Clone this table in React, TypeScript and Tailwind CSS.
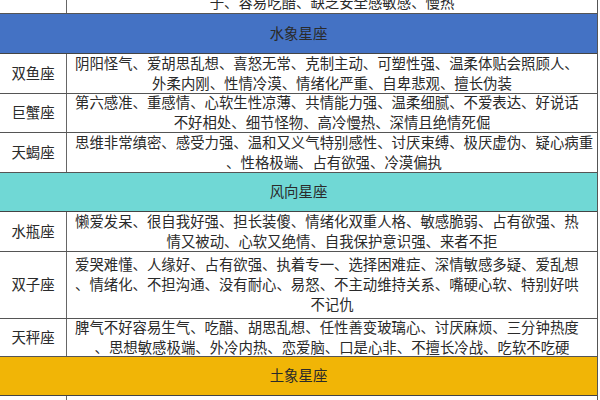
import React from "react";

type SignRow = { kind: "sign"; name: string; h: string; lines: string[] };
type HeadRow = { kind: "head"; title: string; h: string; bg: string };
type Row = SignRow | HeadRow;

const rows: Row[] = [
  {
    kind: "sign",
    name: "射手座",
    h: "h-[41px]",
    lines: [
      "热爱自由、乐观开朗、喜欢冒险、心直口快、粗心大意、不爱被束缚、像个孩",
      "子、容易吃醋、缺乏安全感敏感、慢热",
    ],
  },
  { kind: "head", title: "水象星座", h: "h-[40px]", bg: "bg-[#4472c4]" },
  {
    kind: "sign",
    name: "双鱼座",
    h: "h-[40px]",
    lines: [
      "阴阳怪气、爱胡思乱想、喜怒无常、克制主动、可塑性强、温柔体贴会照顾人、",
      "外柔内刚、性情冷漠、情绪化严重、自卑悲观、擅长伪装",
    ],
  },
  {
    kind: "sign",
    name: "巨蟹座",
    h: "h-[39px]",
    lines: [
      "第六感准、重感情、心软生性凉薄、共情能力强、温柔细腻、不爱表达、好说话",
      "不好相处、细节怪物、高冷慢热、深情且绝情死倔",
    ],
  },
  {
    kind: "sign",
    name: "天蝎座",
    h: "h-[40px]",
    lines: [
      "思维非常缜密、感受力强、温和又义气特别感性、讨厌束缚、极厌虚伪、疑心病重",
      "、性格极端、占有欲强、冷漠偏执",
    ],
  },
  { kind: "head", title: "风向星座", h: "h-[39px]", bg: "bg-[#70d8d5]" },
  {
    kind: "sign",
    name: "水瓶座",
    h: "h-[40px]",
    lines: [
      "懒爱发呆、很自我好强、担长装傻、情绪化双重人格、敏感脆弱、占有欲强、热",
      "情又被动、心软又绝情、自我保护意识强、来者不拒",
    ],
  },
  {
    kind: "sign",
    name: "双子座",
    h: "h-[67px]",
    lines: [
      "爱哭难懂、人缘好、占有欲强、执着专一、选择困难症、深情敏感多疑、爱乱想",
      "、情绪化、不担沟通、没有耐心、易怒、不主动维持关系、嘴硬心软、特别好哄",
      "不记仇",
    ],
  },
  {
    kind: "sign",
    name: "天秤座",
    h: "h-[38px]",
    lines: [
      "脾气不好容易生气、吃醋、胡思乱想、任性善变玻璃心、讨厌麻烦、三分钟热度",
      "、思想敏感极端、外冷内热、恋爱脑、口是心非、不擅长冷战、吃软不吃硬",
    ],
  },
  { kind: "head", title: "土象星座", h: "h-[39px]", bg: "bg-[#f1b506]" },
  {
    kind: "sign",
    name: "金牛座",
    h: "h-[52px]",
    lines: [
      "固执倔强、慢热专一、占有欲强、追求安稳、重视物质、有耐心、心思细腻、",
      "不善表达、记仇、吃软不吃硬",
    ],
  },
];

const App = () => {
  return (
    <div
      className="w-[600px] h-[400px] overflow-hidden bg-white text-[#2a2a2a] text-[14.4px] leading-[20px]"
      style={{ fontFamily: '"Liberation Serif", "Noto Sans CJK SC", serif' }}
    >
      <div className="-mt-[27px] w-[598px] border-r border-[#555]">
        {rows.map((row, i) =>
          row.kind === "head" ? (
            <div
              key={i}
              className={`${row.h} ${row.bg} border-b border-[#444] flex items-center justify-center`}
            >
              {row.title}
            </div>
          ) : (
            <div key={i} className={`${row.h} flex border-b border-[#555]`}>
              <div className="w-[67px] shrink-0 border-r border-[#666] flex items-center justify-center">
                {row.name}
              </div>
              <div className="flex-1 px-2 flex flex-col justify-center">
                {row.lines.map((line, j) => (
                  <div
                    key={j}
                    className={
                      j === row.lines.length - 1
                        ? "whitespace-nowrap text-center"
                        : "whitespace-nowrap text-left"
                    }
                  >
                    {line}
                  </div>
                ))}
              </div>
            </div>
          )
        )}
      </div>
    </div>
  );
};

export default App;
